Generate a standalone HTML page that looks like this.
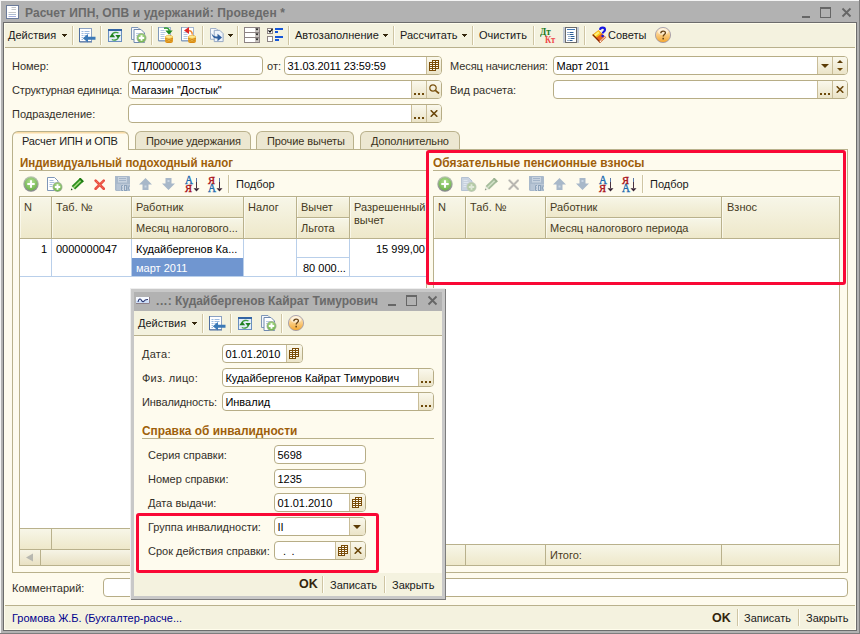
<!DOCTYPE html>
<html><head><meta charset="utf-8">
<style>
*{box-sizing:border-box;margin:0;padding:0}
html,body{width:860px;height:634px;overflow:hidden}
body{position:relative;background:#b2b2b2;font-family:"Liberation Sans",sans-serif;font-size:11px;color:#1a1a1a;-webkit-font-smoothing:antialiased}
.a{position:absolute}
.t{position:absolute;white-space:nowrap;line-height:14px;height:14px}
.in{position:absolute;background:#fff;border:1px solid #b7ad86;border-radius:4px;height:19px}
.in .t{left:2.400px;top:2px;color:#000}
.btn{position:absolute;top:0;bottom:0;border-left:1px solid #c9bd98;background:linear-gradient(#faf8ec,#ebe4c8)}
.sep{position:absolute;width:2px;height:19px;border-left:1px solid #cfc5a3;border-right:1px solid #fffef6}
.hd{position:absolute;box-shadow:inset 1px 1px 0 rgba(255,255,250,0.600);background:linear-gradient(#f7f6e8,#eee8ca);border-right:1px solid #b9b18c;border-bottom:1px solid #b9b18c}
.hd .t{left:4px;top:3px;color:#453a22}
.sec{position:absolute;font-weight:bold;color:#9e5f0a;white-space:nowrap;line-height:14px;font-size:12px;transform-origin:0 0}
.ln{position:absolute;height:1px;background:#b9b18c}
.lab{color:#33302a}
.tab{height:18px;border:1px solid #b9b18c;border-bottom:none;border-radius:6px 6px 0 0;background:#ece7d1}
.tab .t{left:10px;top:2px;color:#3a3220;letter-spacing:-0.100px}
.dd{width:5px;height:1px;background:#33260c;box-shadow:inset 0 0 0 1px #33260c}
.dd:before{content:"";position:absolute;left:1px;top:1px;width:3px;height:1px;background:#33260c}
.dd:after{content:"";position:absolute;left:2px;top:2px;width:1px;height:1px;background:#33260c}
</style></head><body>
<svg width="0" height="0" style="position:absolute">
<defs>
<linearGradient id="gR" x1="0" y1="0" x2="0" y2="1"><stop offset="0" stop-color="#b9c6b0"/><stop offset="1" stop-color="#86868e"/></linearGradient><radialGradient id="gG" cx="0.5" cy="0.35" r="0.7"><stop offset="0" stop-color="#b6e296"/><stop offset="1" stop-color="#68ae46"/></radialGradient>
<linearGradient id="gH" x1="0" y1="0" x2="0" y2="1"><stop offset="0" stop-color="#fff3dc"/><stop offset="0.45" stop-color="#fbd08a"/><stop offset="1" stop-color="#f3a52c"/></linearGradient>
<linearGradient id="gC" x1="0" y1="0" x2="1" y2="0"><stop offset="0" stop-color="#f0a820"/><stop offset="0.5" stop-color="#ffe27a"/><stop offset="1" stop-color="#e89a18"/></linearGradient>
<symbol id="iadd" viewBox="0 0 16 16"><circle cx="8" cy="8" r="7.700" fill="url(#gR)"/><circle cx="8" cy="8" r="6.400" fill="url(#gG)"/><path d="M8 4.300v7.400M4.300 8h7.400" stroke="#fff" stroke-width="2"/></symbol>
<symbol id="iaddd" viewBox="0 0 16 16"><circle cx="8" cy="8" r="7.500" fill="#c3cbbd"/><circle cx="8" cy="8" r="6.300" fill="#b4cba6"/><path d="M8 4.500v7M4.500 8h7" stroke="#e6ece2" stroke-width="2.200"/></symbol>
<symbol id="i1" viewBox="0 0 17 16"><rect x="0.500" y="1.500" width="12" height="13" fill="#fff" stroke="#8ba1c2"/><path d="M0.500 1v14h12.500" stroke="#4f6fa2" fill="none"/><path d="M2.500 4.500h2M5.500 4.500h5M2.500 6.500h2M5.500 6.500h5M2.500 8.500h2M5.500 8.500h3M2.500 10.500h1.500M2.500 12.500h1.500" stroke="#9dbbe0"/><path d="M16.500 9.700v3h-7.500v2.800l-5.200-4.300 5.200-4.300v2.800z" fill="#3b79b7"/></symbol>
<symbol id="i2" viewBox="0 0 15 16"><rect x="0.500" y="1.500" width="13" height="12" fill="#e4eefa" stroke="#6a8fc0"/><rect x="0" y="1" width="14" height="2" fill="#3465a4"/><path d="M4.300 6.200a3.800 2.400 0 0 1 6.200-1.200" stroke="#3f9e3f" fill="none" stroke-width="1.300"/><path d="M10 10.300a3.800 2.400 0 0 1-6.200 1.200" stroke="#3f9e3f" fill="none" stroke-width="1.300"/><path d="M1.300 9.300h5.800l-2.900-4z" fill="#1f7f1f"/><path d="M7.400 7h5.400l-2.700 3.700z" fill="#1f7f1f"/></symbol>
<symbol id="i3" viewBox="0 0 16 16"><path d="M0.500 0.500h6.500l2.500 2.500v9.500h-9z" fill="#f4f7fb" stroke="#7f97b8"/><path d="M3 2.500h7l3.500 3.500v9.500h-10.500z" fill="#fff" stroke="#6f89af"/><path d="M5 6.500h5M5 8.500h3" stroke="#b9cbe3"/><circle cx="10.500" cy="11" r="5" fill="#a4b39c"/><circle cx="10.500" cy="11" r="4.200" fill="url(#gG)"/><path d="M10.500 8.300v5.400M7.800 11h5.400" stroke="#fff" stroke-width="1.800"/></symbol>
<symbol id="icoin" viewBox="0 0 8 8"><ellipse cx="4" cy="6.400" rx="3.800" ry="1.500" fill="#d98a10"/><rect x="0.200" y="2" width="7.600" height="4.400" fill="url(#gC)"/><ellipse cx="4" cy="1.900" rx="3.800" ry="1.500" fill="#ffec96" stroke="#e8a21c" stroke-width="0.600"/><path d="M0.200 3.400q3.800 2.400 7.600 0M0.200 4.900q3.800 2.400 7.600 0" stroke="#c97a08" stroke-width="0.800" fill="none"/></symbol>
<symbol id="i4" viewBox="0 0 16 16"><rect x="0.500" y="0.500" width="12" height="13" fill="#fff" stroke="#a3b6d0"/><path d="M0.500 0v14h12" stroke="#7f98ba" fill="none"/><path d="M2.500 3.500h4M2.500 5.500h5M2.500 7.500h4M2.500 9.500h4M2.500 11.500h4" stroke="#b4c8e2"/><path d="M6 1.200c3.500-0.800 5 0.300 5.300 2.600" stroke="#2b9a2b" stroke-width="1.600" fill="none"/><path d="M7.300 3.400h7.400l-3.700 4.400z" fill="#1f8a1f"/><use href="#icoin" x="7" y="8" width="8" height="8"/></symbol>
<symbol id="i5" viewBox="0 0 16 16"><rect x="0.500" y="0.500" width="12" height="13" fill="#fff" stroke="#a3b6d0"/><path d="M0.500 0v14h12" stroke="#7f98ba" fill="none"/><path d="M2.500 5.500h4M2.500 7.500h4M2.500 9.500h4M2.500 11.500h4" stroke="#b4c8e2"/><path d="M6 3.600c4-0.300 5.300 1.200 5.200 4" stroke="#f08a30" stroke-width="1.500" fill="none"/><path d="M8 0v7l-5-3.600z" fill="#e0282a"/><use href="#icoin" x="7" y="8" width="8" height="8"/></symbol>
<symbol id="i6" viewBox="0 0 16 16"><path d="M0.500 0.500h6l3 3v8.500h-9z" fill="#f6f8fc" stroke="#9aabc4"/><path d="M4.500 2.500h6l3.500 3.500v8.500h-9.500z" fill="#eef3fa" stroke="#8fa3c0"/><path d="M1.500 5.500c2 3 4 3.500 6.500 3.500v-3l4.800 4-4.800 4v-2.800c-3 0-5.500-1.500-6.500-5.700z" fill="#2f5f9f"/></symbol>
<symbol id="i7" viewBox="0 0 16 16"><rect x="0" y="0" width="16" height="16" fill="#8d8484"/><rect x="1" y="1" width="10" height="4" fill="#fff"/><rect x="1" y="6" width="10" height="4" fill="#fff"/><rect x="1" y="11" width="10" height="4" fill="#fff"/><rect x="11" y="1" width="4" height="4" fill="#c9c4c0"/><rect x="11" y="6" width="4" height="4" fill="#c9c4c0"/><rect x="11" y="11" width="4" height="4" fill="#c9c4c0"/><path d="M11.500 1.500h3l-1.500 2zM11.500 6.500h3l-1.500 2zM11.500 11.500h3l-1.500 2z" fill="#000"/></symbol>
<symbol id="i8" viewBox="0 0 17 16"><rect x="0.500" y="1.500" width="5" height="5" fill="#fff" stroke="#8d8484"/><rect x="0.500" y="9.500" width="5" height="5" fill="#fff" stroke="#8d8484"/><path d="M1.500 3.300l1.500 1.800 2.400-3.200" stroke="#000" stroke-width="1.200" fill="none"/><path d="M8 2h8M8 10h8" stroke="#1455d8" stroke-width="2"/><path d="M8 5h3M8 13h4" stroke="#1455d8" stroke-width="2"/></symbol>
<symbol id="ilist" viewBox="0 0 16 16"><rect x="0" y="0" width="16" height="16" fill="#c3c9d2"/><rect x="2.500" y="0.500" width="11" height="15" fill="#fff" stroke="#6a6a6a"/><path d="M4 2.500h8" stroke="#3f78b5"/><path d="M4.500 5.500h1M6.500 5.500h4M4.500 7.500h1M6.500 7.500h4M5.500 9.500h1M7.500 9.500h4M5.500 11.500h1M7.500 11.500h4M4.500 13.500h1M6.500 13.500h3" stroke="#2d5f98" stroke-width="1.200"/></symbol>
<symbol id="ibook" viewBox="0 0 16 17"><path d="M1.300 9L7.500 4.300L15 11.500L9 17z" fill="#e8641c"/><path d="M1.300 9L7.500 4.300L10.700 7.400L4.500 12.200z" fill="#f9c41a"/><path d="M2.800 9L7.200 5.600L8.600 7L4.200 10.400z" fill="#fff27a"/><path d="M1.300 9L9 17L9.200 15.600L2.300 8.300z" fill="#7a2408"/><path d="M9.400 16.400L14.800 11.300L13.700 10.200L8.300 15.300z" fill="#fff" stroke="#c8581a" stroke-width="0.600"/><path d="M10 15l3.800-3.600" stroke="#c8581a" stroke-width="0.500"/><path d="M9 3.800c0.300-2.900 5-2.900 5 0 0 2-2.300 2-2.300 3.800" stroke="#1616e2" stroke-width="2.100" fill="none"/><circle cx="11.600" cy="10" r="1.250" fill="#1616e2"/></symbol>
<symbol id="ihelp" viewBox="0 0 16 16"><circle cx="8" cy="8" r="7.600" fill="url(#gH)" stroke="#9a96a8" stroke-width="0.800"/><ellipse cx="8" cy="4.800" rx="5.200" ry="3" fill="#fff" opacity="0.500"/><path d="M5.800 6.300c0-2.900 4.800-2.900 4.600-0.300-0.100 1.500-2.200 1.700-2.200 3.500" stroke="#6a4618" stroke-width="1.400" fill="none"/><rect x="7.400" y="10.800" width="1.600" height="1.600" fill="#6a4618"/></symbol>
<symbol id="icopy" viewBox="0 0 16 16"><path d="M0.500 1.500h7l3.500 3.500v9.500h-10.500z" fill="#fff" stroke="#7f97b8"/><path d="M2.500 4.500h4M2.500 6.500h5M2.500 8.500h3M2.500 10.500h3" stroke="#a9c0de"/><circle cx="10.500" cy="11" r="5" fill="#a4b39c"/><circle cx="10.500" cy="11" r="4.200" fill="url(#gG)"/><path d="M10.500 8.300v5.400M7.800 11h5.400" stroke="#fff" stroke-width="1.800"/></symbol>
<symbol id="icopyd" viewBox="0 0 16 16"><path d="M0.500 1.500h7l3.500 3.500v9.500h-10.500z" fill="#c9d3e0" stroke="#b5c2d3"/><path d="M2.500 4.500h4M2.500 6.500h5M2.500 8.500h3M2.500 10.500h3" stroke="#dfe6ef"/><circle cx="10.500" cy="11" r="5" fill="#c3cbbd"/><circle cx="10.500" cy="11" r="4.200" fill="#b4cba6"/><path d="M10.500 8.300v5.400M7.800 11h5.400" stroke="#dfe8d8" stroke-width="1.800"/></symbol>
<symbol id="ipen" viewBox="0 0 14 13"><g transform="translate(0.800,12.300) rotate(-44)"><path d="M0 0l3.600-2.500v5z" fill="#f6f6ea"/><path d="M0 0l1.700-1.200v2.400z" fill="#1a4a12"/><rect x="3.600" y="-2.500" width="12" height="5" fill="#2b8d1d"/><rect x="3.600" y="-0.800" width="10.500" height="1.500" fill="#a8dc80"/><rect x="13.800" y="-2.500" width="1.800" height="5" fill="#1f7a14"/></g></symbol>
<symbol id="ipend" viewBox="0 0 14 13"><g transform="translate(0.800,12.300) rotate(-44)"><path d="M0 0l3.600-2.500v5z" fill="#ecece2"/><path d="M0 0l1.700-1.200v2.400z" fill="#8f9f88"/><rect x="3.600" y="-2.500" width="12" height="5" fill="#a5bc9b"/><rect x="3.600" y="-0.800" width="10.500" height="1.500" fill="#d2e2c8"/><rect x="13.800" y="-2.500" width="1.800" height="5" fill="#9bb292"/></g></symbol>
<symbol id="idel" viewBox="0 0 12 12"><path d="M1.700 1.700l8.600 8.600M10.300 1.700l-8.600 8.600" stroke="#ea4a42" stroke-width="2.700" stroke-linecap="round"/><path d="M2 2l8 8M10 2l-8 8" stroke="#f2a060" stroke-width="0.900" stroke-dasharray="1 1.200"/></symbol>
<symbol id="ideld" viewBox="0 0 12 12"><path d="M1.500 1.500l9 9M10.500 1.500l-9 9" stroke="#dddbd2" stroke-width="2.800" stroke-linecap="round"/><path d="M1.500 1.500l9 9M10.500 1.500l-9 9" stroke="#b4b2ad" stroke-width="1.500" stroke-linecap="round"/></symbol>
<symbol id="iflop" viewBox="0 0 15 15"><path d="M0 0h14.500l0.500 0.500v14.500h-14l-1-1z" fill="#a9b9cb"/><rect x="3" y="1" width="9" height="5.500" fill="#c8d3df"/><path d="M4 2.500h7M4 4.500h7" stroke="#a3b4c8"/><rect x="1.500" y="8" width="3.500" height="6" fill="#b7c5d5"/><rect x="5.500" y="8.500" width="9.500" height="6.500" fill="#cdd7e3"/><path d="M8 9.500h-1.500v5h1.500M6.500 12h1.200" stroke="#8ca2ba" stroke-width="1" fill="none"/><rect x="9.500" y="9.500" width="2" height="5" fill="none" stroke="#8ca2ba" stroke-width="1"/><path d="M13 9v6M15 9.200l-2 2.800 2 2.800" stroke="#8ca2ba" stroke-width="1" fill="none"/></symbol>
<symbol id="iup" viewBox="0 0 13 12"><path d="M6.500 0l6.500 6.500h-3.500v5.500h-6v-5.500h-3.500z" fill="#a8b8c9"/><rect x="5.500" y="7.500" width="2" height="2" fill="#c9d6e4"/></symbol>
<symbol id="idown" viewBox="0 0 13 12"><path d="M6.500 12l6.500-6.500h-3.500v-5.500h-6v5.500h-3.500z" fill="#a8b8c9"/><rect x="5.500" y="2" width="2" height="2" fill="#c9d6e4"/></symbol>

<symbol id="ical" viewBox="0 0 10 11"><path d="M3 0h7v9h-3v2h-7v-9h3z" fill="#7a4c08"/><path d="M4 1h2v1h-2zM7 1h2v1h-2zM1 3h2v1h-2zM4 3h2v1h-2zM7 3h2v1h-2zM1 5h2v1h-2zM4 5h2v1h-2zM7 5h2v1h-2zM1 7h2v1h-2zM4 7h2v1h-2zM7 7h2v1h-2zM1 9h2v1h-2zM4 9h2v1h-2z" fill="#fffdf2"/></symbol>
<symbol id="idots" viewBox="0 0 11 2"><path d="M0 0h2v2h-2zM4 0h2v2h-2zM8 0h2v2h-2z" fill="#6e4a0a"/></symbol>
<symbol id="ix" viewBox="0 0 8 7"><path d="M0.700 0.300l6.600 6.400M7.300 0.300l-6.600 6.400" stroke="#6a460a" stroke-width="1.600"/></symbol>
<symbol id="imag" viewBox="0 0 11 10"><circle cx="4" cy="4" r="3.200" fill="none" stroke="#7a5210" stroke-width="1.200"/><path d="M6.300 6.300l3.700 3.200" stroke="#7a5210" stroke-width="1.700"/></symbol>
<symbol id="iddn" viewBox="0 0 8 4"><path d="M0 0h8l-4 4z" fill="#5c3c06"/></symbol>
<symbol id="ispin" viewBox="0 0 6 11"><path d="M0 3h6l-3-3z" fill="#5c3c06"/><path d="M0 8h6l-3 3z" fill="#6e4a0a"/></symbol>
</defs></svg>

<!-- main window frame -->
<div class="a" style="left:0;top:0;width:860px;height:1px;background:#f4f4f4"></div>
<div class="a" style="left:0;top:0;width:1px;height:634px;background:#f4f4f4"></div>
<div class="a" style="left:859px;top:0;width:1px;height:634px;background:#7d7d7d"></div>
<div class="a" style="left:0;top:633px;width:860px;height:1px;background:#7d7d7d"></div>
<div class="a" style="left:3px;top:22px;width:854px;height:609px;background:#6c6c6c"></div>
<div class="a" style="left:4px;top:23px;width:852px;height:607px;background:#fefbee"></div>
<!-- title bar -->
<svg class="a" style="left:6px;top:5px" width="13" height="14" viewBox="0 0 13 14"><rect x="0.5" y="0.5" width="12" height="13" fill="#fff" stroke="#6c7c9b"/><path d="M5.500 2.500h4.500M5.500 4.500h4.500M2.500 7.500h7.500" stroke="#c4c6c8" stroke-width="1"/><path d="M2.500 9.500h7.500" stroke="#aebcd0"/><path d="M2.500 11.500h7.500" stroke="#a4aede"/></svg>
<div class="t" style="left:25px;top:6px;font-size:12px;font-weight:bold;color:#6a6a6a;letter-spacing:0.100px">Расчет ИПН, ОПВ и удержаний: Проведен *</div>
<div class="a" style="left:802px;top:16px;width:8px;height:2px;background:#666"></div>
<div class="a" style="left:820px;top:7px;width:11px;height:11px;border:1px solid #666;border-top-width:2px"></div>
<svg class="a" style="left:841px;top:7px" width="11" height="11" viewBox="0 0 11 11"><path d="M1.5 1.5l8 8M9.5 1.5l-8 8" stroke="#666" stroke-width="1.8"/></svg>

<!-- toolbar -->
<div class="a" style="left:4px;top:23px;width:852px;height:24px;background:#f4f2df"></div>
<div class="a" style="left:4px;top:47px;width:852px;height:1px;background:#b8b08c"></div>
<div class="t" style="left:8px;top:28px">Действия</div>
<div class="a dd" style="left:62px;top:34px"></div>
<div class="sep" style="left:72px;top:26px"></div>
<div class="sep" style="left:100px;top:26px"></div>
<div class="sep" style="left:151px;top:26px"></div>
<div class="sep" style="left:202px;top:26px"></div>
<div class="sep" style="left:237px;top:26px"></div>
<div class="sep" style="left:288px;top:26px"></div>
<div class="t" style="left:295px;top:28px">Автозаполнение</div>
<div class="a dd" style="left:383px;top:34px"></div>
<div class="sep" style="left:393px;top:26px"></div>
<div class="t" style="left:400px;top:28px">Рассчитать</div>
<div class="a dd" style="left:462px;top:34px"></div>
<div class="sep" style="left:472px;top:26px"></div>
<div class="t" style="left:479px;top:28px">Очистить</div>
<div class="sep" style="left:533px;top:26px"></div>
<div class="sep" style="left:584px;top:26px"></div>
<div class="t" style="left:608px;top:28px">Советы</div>
<div class="a dd" style="left:228px;top:34px"></div>

<!-- header fields -->
<div class="t lab" style="left:12px;top:59px">Номер:</div>
<div class="in" style="left:128px;top:56px;width:135px"><div class="t">ТДЛ00000013</div></div>
<div class="t lab" style="left:267px;top:59px">от:</div>
<div class="in" style="left:284px;top:56px;width:158px"><div class="t" style="letter-spacing:-0.090px">31.03.2011 23:59:59</div><div class="btn" style="right:0px;width:15px;border-radius:0 3px 3px 0"><svg class="a" style="left:2px;top:3px" width="10" height="11"><use href="#ical"/></svg></div></div>
<div class="t lab" style="left:450px;top:59px;letter-spacing:-0.090px">Месяц начисления:</div>
<div class="in" style="left:553px;top:56px;width:295px"><div class="t">Март 2011</div><div class="btn" style="right:15px;width:15px"><svg class="a" style="left:3px;top:7px" width="8" height="4"><use href="#iddn"/></svg></div><div class="btn" style="right:0px;width:15px;border-radius:0 3px 3px 0"><svg class="a" style="left:4px;top:3px" width="6" height="11"><use href="#ispin"/></svg></div></div>
<div class="t lab" style="left:12px;top:83px;letter-spacing:-0.160px">Структурная единица:</div>
<div class="in" style="left:128px;top:80px;width:314px"><div class="t">Магазин "Достык"</div><div class="btn" style="right:15px;width:15px"><svg class="a" style="left:2px;top:12px" width="11" height="2"><use href="#idots"/></svg></div><div class="btn" style="right:0px;width:15px;border-radius:0 3px 3px 0"><svg class="a" style="left:2px;top:3px" width="11" height="10"><use href="#imag"/></svg></div></div>
<div class="t lab" style="left:450px;top:83px">Вид расчета:</div>
<div class="in" style="left:553px;top:80px;width:295px"><div class="btn" style="right:15px;width:15px"><svg class="a" style="left:2px;top:12px" width="11" height="2"><use href="#idots"/></svg></div><div class="btn" style="right:0px;width:15px;border-radius:0 3px 3px 0"><svg class="a" style="left:3px;top:5px" width="8" height="7"><use href="#ix"/></svg></div></div>
<div class="t lab" style="left:12px;top:107px">Подразделение:</div>
<div class="in" style="left:128px;top:104px;width:314px"><div class="btn" style="right:15px;width:15px"><svg class="a" style="left:2px;top:12px" width="11" height="2"><use href="#idots"/></svg></div><div class="btn" style="right:0px;width:15px;border-radius:0 3px 3px 0"><svg class="a" style="left:3px;top:5px" width="8" height="7"><use href="#ix"/></svg></div></div>
<!-- tabs -->
<div class="a" style="left:12px;top:149px;width:836px;height:424px;border:1px solid #b9b18c;background:#fefbee"></div>
<div class="a tab" style="left:135px;top:131px;width:116px"><div class="t">Прочие удержания</div></div>
<div class="a tab" style="left:256px;top:131px;width:98px"><div class="t">Прочие вычеты</div></div>
<div class="a tab" style="left:360px;top:131px;width:100px"><div class="t">Дополнительно</div></div>
<div class="a" style="left:12px;top:131px;width:117px;height:19px;border:1px solid #b9b18c;border-bottom:none;border-radius:6px 6px 0 0;background:linear-gradient(#f9d596 0,#fbe3b8 1px,#fefbee 2.500px);overflow:hidden"><div class="t" style="left:9px;top:2px;color:#222;letter-spacing:-0.130px">Расчет ИПН и ОПВ</div></div>

<!-- left section -->
<div class="sec" style="left:20px;top:156px;transform:scaleX(0.96)">Индивидуальный подоходный налог</div>
<div class="ln" style="left:19px;top:170px;width:408px"></div>
<div class="sep" style="left:228px;top:175px;height:18px"></div>
<div class="t" style="left:236px;top:177px">Подбор</div>

<!-- left table -->
<div class="a" style="left:19px;top:196px;width:408px;height:370px;background:#fff;border:1px solid #b9b18c"></div>
<div class="hd" style="left:20px;top:197px;width:32px;height:42px"><div class="t">N</div></div>
<div class="hd" style="left:52px;top:197px;width:80px;height:42px"><div class="t">Таб. №</div></div>
<div class="hd" style="left:132px;top:197px;width:112px;height:21px"><div class="t">Работник</div></div>
<div class="hd" style="left:132px;top:218px;width:112px;height:21px"><div class="t">Месяц налогового...</div></div>
<div class="hd" style="left:244px;top:197px;width:53px;height:42px"><div class="t">Налог</div></div>
<div class="hd" style="left:297px;top:197px;width:53px;height:21px"><div class="t">Вычет</div></div>
<div class="hd" style="left:297px;top:218px;width:53px;height:21px"><div class="t">Льгота</div></div>
<div class="hd" style="left:350px;top:197px;width:76px;height:42px;border-right:none"><div class="t" style="left:4px">Разрешенный</div><div class="t" style="left:4px;top:16px">вычет</div></div>
<!-- data -->
<div class="a" style="left:20px;top:276px;width:406px;height:1px;background:#b9cfea"></div>
<div class="a" style="left:51px;top:239px;width:1px;height:37px;background:#b9cfea"></div>
<div class="a" style="left:131px;top:239px;width:1px;height:37px;background:#b9cfea"></div>
<div class="a" style="left:243px;top:239px;width:1px;height:37px;background:#b9cfea"></div>
<div class="a" style="left:296px;top:239px;width:1px;height:37px;background:#b9cfea"></div>
<div class="a" style="left:349px;top:239px;width:1px;height:37px;background:#b9cfea"></div>
<div class="a" style="left:297px;top:257px;width:52px;height:1px;background:#b9cfea"></div>
<div class="a" style="left:132px;top:258px;width:111px;height:18px;background:#7096d0"></div>
<div class="t" style="left:41px;top:242px;color:#000">1</div>
<div class="t" style="left:56px;top:242px;color:#000">0000000047</div>
<div class="t" style="left:136px;top:242px;color:#000">Кудайбергенов Ка...</div>
<div class="t" style="left:136px;top:261px;color:#fff">март 2011</div>
<div class="t" style="left:303px;top:261px;color:#000">80 000...</div>
<div class="t" style="left:376px;top:242px;color:#000">15 999,00</div>
<!-- left table footer + scrollbar -->
<div class="a" style="left:20px;top:528px;width:406px;height:22px;background:linear-gradient(#f7f6e8,#eee8ca);border-top:1px solid #b9b18c;border-bottom:1px solid #b9b18c"></div>
<div class="a" style="left:51px;top:529px;width:1px;height:20px;background:#b9b18c"></div>
<div class="a" style="left:20px;top:550px;width:406px;height:15px;background:linear-gradient(#f6f4e6,#e9e1c3)"></div>
<div class="a" style="left:40px;top:550px;width:1px;height:15px;background:#b9b18c"></div>
<svg class="a" style="left:26px;top:553px" width="8" height="9"><path d="M7 0.5v8l-7-4z" fill="#b8b8b0"/></svg>

<!-- right section -->
<div class="sec" style="left:433px;top:156px;transform:scaleX(0.9925)">Обязательные пенсионные взносы</div>
<div class="ln" style="left:433px;top:170px;width:407px"></div>
<div class="sep" style="left:642px;top:175px;height:18px"></div>
<div class="t" style="left:650px;top:177px">Подбор</div>
<div class="a" style="left:433px;top:196px;width:407px;height:370px;background:#fff;border:1px solid #b9b18c"></div>
<div class="hd" style="left:434px;top:197px;width:32px;height:42px"><div class="t">N</div></div>
<div class="hd" style="left:466px;top:197px;width:80px;height:42px"><div class="t">Таб. №</div></div>
<div class="hd" style="left:546px;top:197px;width:176px;height:21px"><div class="t">Работник</div></div>
<div class="hd" style="left:546px;top:218px;width:176px;height:21px"><div class="t">Месяц налогового периода</div></div>
<div class="hd" style="left:722px;top:197px;width:117px;height:42px;border-right:none"><div class="t" style="left:5px">Взнос</div></div>
<div class="a" style="left:434px;top:544px;width:405px;height:21px;background:linear-gradient(#f7f6e8,#eee8ca);border-top:1px solid #b9b18c"></div>
<div class="a" style="left:465px;top:545px;width:1px;height:20px;background:#b9b18c"></div>
<div class="a" style="left:545px;top:545px;width:1px;height:20px;background:#b9b18c"></div>
<div class="a" style="left:721px;top:545px;width:1px;height:20px;background:#b9b18c"></div>
<div class="t" style="left:550px;top:548px;color:#4a3c1c">Итого:</div>

<!-- comment + footer -->
<div class="t lab" style="left:12px;top:581px">Комментарий:</div>
<div class="in" style="left:103px;top:578px;width:745px"></div>
<div class="a" style="left:4px;top:605px;width:852px;height:1px;background:#b9b18c"></div>
<div class="a" style="left:4px;top:606px;width:852px;height:24px;background:#f4f2df"></div>
<div class="t" style="left:12px;top:611px;color:#00008c">Громова Ж.Б. (Бухгалтер-расче...</div>
<div class="t" style="left:712px;top:611px;font-weight:bold;font-size:12.5px;color:#33250d">OK</div>
<div class="sep" style="left:737px;top:609px;height:17px"></div>
<div class="t" style="left:744px;top:611px">Записать</div>
<div class="sep" style="left:798px;top:609px;height:17px"></div>
<div class="t" style="left:806px;top:611px">Закрыть</div>


<!-- main toolbar icons -->
<svg class="a" style="left:79px;top:27px" width="17" height="16"><use href="#i1"/></svg>
<svg class="a" style="left:108px;top:28px" width="15" height="16"><use href="#i2"/></svg>
<svg class="a" style="left:131px;top:27px" width="16" height="16"><use href="#i3"/></svg>
<svg class="a" style="left:158px;top:27px" width="16" height="16"><use href="#i4"/></svg>
<svg class="a" style="left:181px;top:27px" width="16" height="16"><use href="#i5"/></svg>
<svg class="a" style="left:210px;top:27.500px" width="15" height="15"><use href="#i6"/></svg>
<svg class="a" style="left:244px;top:27px" width="16" height="16"><use href="#i7"/></svg>
<svg class="a" style="left:267px;top:27px" width="17" height="16"><use href="#i8"/></svg>
<div class="a" style="left:540px;top:27px;font:bold 9.500px/10px 'Liberation Serif',serif;color:#1b7a1b;transform:scaleX(0.960);transform-origin:0 0">Дт</div>
<div class="a" style="left:545px;top:34.500px;font:bold 9.500px/10px 'Liberation Serif',serif;color:#f04848;transform:scaleX(0.900);transform-origin:0 0">Кт</div>
<svg class="a" style="left:563px;top:27px" width="16" height="16"><use href="#ilist"/></svg>
<svg class="a" style="left:591px;top:26px" width="16" height="17"><use href="#ibook"/></svg>
<svg class="a" style="left:655px;top:27px" width="16" height="16"><use href="#ihelp"/></svg>
<!-- left table toolbar icons -->
<svg class="a" style="left:23px;top:176px" width="16" height="16"><use href="#iadd"/></svg>
<svg class="a" style="left:47px;top:176px" width="16" height="16"><use href="#icopy"/></svg>
<svg class="a" style="left:70px;top:177.500px" width="14" height="13"><use href="#ipen"/></svg>
<svg class="a" style="left:93.800px;top:178.800px" width="11.400" height="11.400"><use href="#idel"/></svg>
<svg class="a" style="left:115px;top:176px" width="15" height="15"><use href="#iflop"/></svg>
<svg class="a" style="left:139px;top:178px" width="13" height="12"><use href="#iup"/></svg>
<svg class="a" style="left:162px;top:178px" width="13" height="12"><use href="#idown"/></svg>
<div class="a" style="left:185px;top:174.500px;font:12px/10px 'Liberation Serif',serif;-webkit-text-stroke:0.400px #1f6cb0;color:#1f6cb0;transform:scaleX(0.920);transform-origin:0 0">А</div>
<div class="a" style="left:185px;top:183.500px;font:10.500px/10px 'Liberation Serif',serif;-webkit-text-stroke:0.400px #a81018;color:#a81018">Я</div>
<svg class="a" style="left:193px;top:178px" width="8" height="14"><path d="M3.500 0v10" stroke="#4a3242" stroke-width="1"/><path d="M3.500 0v4" stroke="#5878a8" stroke-width="1"/><path d="M0.500 10.200h6l-3 3.300z" fill="#3a2636"/></svg>
<div class="a" style="left:208px;top:175.500px;font:10.500px/10px 'Liberation Serif',serif;-webkit-text-stroke:0.400px #a81018;color:#a81018">Я</div>
<div class="a" style="left:208px;top:182.500px;font:12px/10px 'Liberation Serif',serif;-webkit-text-stroke:0.400px #1f6cb0;color:#1f6cb0;transform:scaleX(0.920);transform-origin:0 0">А</div>
<svg class="a" style="left:216px;top:178px" width="8" height="14"><path d="M3.500 0v10" stroke="#4a3242" stroke-width="1"/><path d="M3.500 0v4" stroke="#5878a8" stroke-width="1"/><path d="M0.500 10.200h6l-3 3.300z" fill="#3a2636"/></svg>
<!-- right table toolbar icons -->
<svg class="a" style="left:437px;top:176px" width="16" height="16"><use href="#iadd"/></svg>
<svg class="a" style="left:461px;top:176px" width="16" height="16"><use href="#icopyd"/></svg>
<svg class="a" style="left:484px;top:177.500px" width="14" height="13"><use href="#ipend"/></svg>
<svg class="a" style="left:507.800px;top:178.800px" width="11.400" height="11.400"><use href="#ideld"/></svg>
<svg class="a" style="left:529px;top:176px" width="15" height="15"><use href="#iflop"/></svg>
<svg class="a" style="left:553px;top:178px" width="13" height="12"><use href="#iup"/></svg>
<svg class="a" style="left:576px;top:178px" width="13" height="12"><use href="#idown"/></svg>
<div class="a" style="left:599px;top:174.500px;font:12px/10px 'Liberation Serif',serif;-webkit-text-stroke:0.400px #1f6cb0;color:#1f6cb0;transform:scaleX(0.920);transform-origin:0 0">А</div>
<div class="a" style="left:599px;top:183.500px;font:10.500px/10px 'Liberation Serif',serif;-webkit-text-stroke:0.400px #a81018;color:#a81018">Я</div>
<svg class="a" style="left:607px;top:178px" width="8" height="14"><path d="M3.500 0v10" stroke="#4a3242" stroke-width="1"/><path d="M3.500 0v4" stroke="#5878a8" stroke-width="1"/><path d="M0.500 10.200h6l-3 3.300z" fill="#3a2636"/></svg>
<div class="a" style="left:622px;top:175.500px;font:10.500px/10px 'Liberation Serif',serif;-webkit-text-stroke:0.400px #a81018;color:#a81018">Я</div>
<div class="a" style="left:622px;top:182.500px;font:12px/10px 'Liberation Serif',serif;-webkit-text-stroke:0.400px #1f6cb0;color:#1f6cb0;transform:scaleX(0.920);transform-origin:0 0">А</div>
<svg class="a" style="left:630px;top:178px" width="8" height="14"><path d="M3.500 0v10" stroke="#4a3242" stroke-width="1"/><path d="M3.500 0v4" stroke="#5878a8" stroke-width="1"/><path d="M0.500 10.200h6l-3 3.300z" fill="#3a2636"/></svg>
<!-- red highlight 1 -->
<div class="a" style="left:426px;top:150px;width:420px;height:135px;border:3px solid #f90835;border-radius:3px"></div>

<div class="a" style="left:4px;top:23px;width:852px;height:607px;border:1px solid #fffdec;pointer-events:none"></div>
<!-- dialog -->
<div class="a" style="left:130px;top:288px;width:315px;height:311px;background:#eeeeee"></div>
<div class="a" style="left:131px;top:289px;width:315px;height:311px;background:#7c7c7c"></div>
<div class="a" style="left:131px;top:289px;width:314px;height:310px;background:#c8c8c8"></div>
<div class="a" style="left:134px;top:292px;width:308px;height:19px;background:#b2b2b2"></div>
<div class="a" style="left:134px;top:311px;width:308px;height:24px;background:#f4f2df"></div>
<div class="a" style="left:134px;top:335px;width:308px;height:1px;background:#b8b08c"></div>
<div class="a" style="left:134px;top:336px;width:308px;height:237px;background:#fefbee"></div>
<div class="a" style="left:134px;top:573px;width:308px;height:23px;background:#f4f2df"></div>
<!-- dialog title -->
<svg class="a" style="left:136px;top:297px" width="14" height="7" viewBox="0 0 14 7"><rect width="14" height="7" fill="#cfe0fa"/><rect width="14" height="3.500" fill="#f6f9ff"/><path d="M13.500 0v6.500h-13.500" stroke="#8f8088" stroke-width="1" fill="none"/><path d="M2 5c0.800-3.600 2.500-3.800 3.600-1.600s2.400 1.200 3.400-0.200c0.600-0.700 1.800-0.700 3-0.700" fill="none" stroke="#27346e" stroke-width="1.100"/></svg>
<div class="t" style="left:156px;top:294px;font-size:12px;font-weight:bold;color:#6a6a6a;letter-spacing:-0.050px"><span style="letter-spacing:0.600px">...</span>: Кудайбергенов Кайрат Тимурович</div>
<div class="a" style="left:388px;top:304px;width:8px;height:2px;background:#666"></div>
<div class="a" style="left:406px;top:295px;width:11px;height:11px;border:1px solid #666;border-top-width:2px"></div>
<svg class="a" style="left:427px;top:295px" width="11" height="11" viewBox="0 0 11 11"><path d="M1.5 1.500l8 8M9.500 1.500l-8 8" stroke="#666" stroke-width="1.800"/></svg>
<!-- dialog toolbar -->
<div class="t" style="left:138px;top:316px">Действия</div>
<div class="a dd" style="left:192px;top:322px"></div>
<div class="sep" style="left:202px;top:314px"></div>
<div class="sep" style="left:230px;top:314px"></div>
<div class="sep" style="left:281px;top:314px"></div>

<svg class="a" style="left:209px;top:315px" width="17" height="16"><use href="#i1"/></svg>
<svg class="a" style="left:238px;top:316px" width="15" height="16"><use href="#i2"/></svg>
<svg class="a" style="left:261px;top:315px" width="16" height="16"><use href="#i3"/></svg>
<svg class="a" style="left:288px;top:315px" width="16" height="16"><use href="#ihelp"/></svg>
<!-- dialog fields -->
<div class="t lab" style="left:142px;top:347px;letter-spacing:0.260px">Дата:</div>
<div class="in" style="left:222px;top:344px;width:81px"><div class="t">01.01.2010</div><div class="btn" style="right:0px;width:16px;border-radius:0 3px 3px 0"><svg class="a" style="left:2px;top:3px" width="10" height="11"><use href="#ical"/></svg></div></div>
<div class="t lab" style="left:142px;top:371px;letter-spacing:0.240px">Физ. лицо:</div>
<div class="in" style="left:222px;top:368px;width:212px"><div class="t">Кудайбергенов Кайрат Тимурович</div><div class="btn" style="right:0px;width:15px;border-radius:0 3px 3px 0"><svg class="a" style="left:2px;top:12px" width="11" height="2"><use href="#idots"/></svg></div></div>
<div class="t lab" style="left:142px;top:395px;letter-spacing:-0.100px">Инвалидность:</div>
<div class="in" style="left:222px;top:392px;width:212px"><div class="t">Инвалид</div><div class="btn" style="right:0px;width:15px;border-radius:0 3px 3px 0"><svg class="a" style="left:2px;top:12px" width="11" height="2"><use href="#idots"/></svg></div></div>
<div class="sec" style="left:142px;top:424px;transform:scaleX(0.99)">Справка об инвалидности</div>
<div class="ln" style="left:142px;top:438px;width:292px"></div>
<div class="t lab" style="left:148px;top:448px">Серия справки:</div>
<div class="in" style="left:274px;top:445px;width:92px"><div class="t">5698</div></div>
<div class="t lab" style="left:148px;top:472px">Номер справки:</div>
<div class="in" style="left:274px;top:469px;width:92px"><div class="t">1235</div></div>
<div class="t lab" style="left:148px;top:496px">Дата выдачи:</div>
<div class="in" style="left:274px;top:493px;width:92px"><div class="t">01.01.2010</div><div class="btn" style="right:0px;width:16px;border-radius:0 3px 3px 0"><svg class="a" style="left:2px;top:3px" width="10" height="11"><use href="#ical"/></svg></div></div>
<div class="t lab" style="left:148px;top:520px">Группа инвалидности:</div>
<div class="in" style="left:274px;top:517px;width:92px"><div class="t">II</div><div class="btn" style="right:0px;width:16px;border-radius:0 3px 3px 0"><svg class="a" style="left:3px;top:7px" width="8" height="4"><use href="#iddn"/></svg></div></div>
<div class="t lab" style="left:148px;top:544px">Срок действия справки:</div>
<div class="in" style="left:274px;top:541px;width:92px"><div class="t" style="left:8px;word-spacing:2.500px">. .</div><div class="btn" style="right:15px;width:15px"><svg class="a" style="left:2px;top:3px" width="10" height="11"><use href="#ical"/></svg></div><div class="btn" style="right:0px;width:15px;border-radius:0 3px 3px 0"><svg class="a" style="left:3px;top:5px" width="8" height="7"><use href="#ix"/></svg></div></div>
<!-- dialog footer -->
<div class="t" style="left:299px;top:577px;font-weight:bold;font-size:12.5px;color:#33250d">OK</div>
<div class="sep" style="left:322px;top:576px;height:17px"></div>
<div class="t" style="left:330px;top:578px">Записать</div>
<div class="sep" style="left:384px;top:576px;height:17px"></div>
<div class="t" style="left:392px;top:578px">Закрыть</div>
<!-- red highlight 2 -->
<div class="a" style="left:136px;top:513px;width:243px;height:60px;border:3px solid #f90835;border-radius:3px"></div>
</body></html>
